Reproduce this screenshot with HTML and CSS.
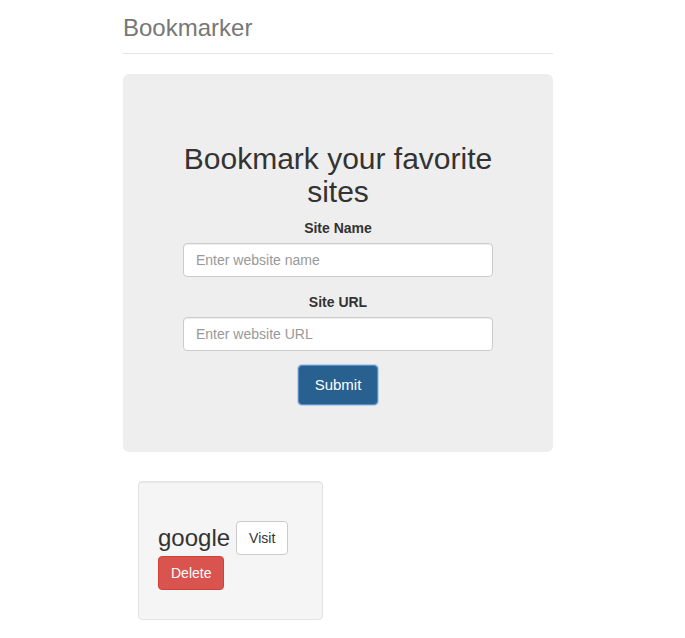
FILE: index.html
```html
<!DOCTYPE html>
<html lang="en">
<head>
<meta charset="utf-8">
<title>Bookmarker</title>
<link rel="stylesheet" href="styles.css">
</head>
<body>
<div class="container">
  <div class="header">
    <h3 class="brand">Bookmarker</h3>
  </div>
  <div class="jumbotron">
    <h2 class="title">Bookmark your favorite sites</h2>
    <form class="form">
      <div class="form-group">
        <label class="label" for="siteName">Site Name</label>
        <input class="input" type="text" id="siteName" placeholder="Enter website name">
      </div>
      <div class="form-group">
        <label class="label" for="siteUrl">Site URL</label>
        <input class="input" type="text" id="siteUrl" placeholder="Enter website URL">
      </div>
      <button type="button" class="btn btn-primary">Submit</button>
    </form>
  </div>
  <div class="bookmarks">
    <div class="well">
      <div class="bookmark">
        <span class="bookmark-name">google</span>
        <a class="btn btn-default" href="#">Visit</a>
        <a class="btn btn-danger" href="#">Delete</a>
      </div>
    </div>
  </div>
</div>
</body>
</html>
```
FILE: styles.css
```css
* { box-sizing: border-box; }
html, body { margin: 0; padding: 0; }
body {
  font-family: "Liberation Sans", Arial, Helvetica, sans-serif;
  font-size: 14px;
  line-height: 1.42857;
  color: #333;
  background: #fff;
}
.container {
  width: 430px;
  margin-left: 123px;
}
.header {
  padding: 15px 0 12px;
  border-bottom: 1px solid #e5e5e5;
  margin-bottom: 20px;
}
.brand {
  margin: 0;
  font-size: 24px;
  font-weight: normal;
  line-height: 26px;
  color: #777;
}
.jumbotron {
  background: #eee;
  border-radius: 6px;
  padding: 48px 60px 47px;
  text-align: center;
  margin-bottom: 29px;
}
.title {
  margin: 20px 0 10px;
  font-size: 30px;
  font-weight: normal;
  line-height: 33px;
  color: #333;
}
.form-group { margin-bottom: 15px; }
.label {
  display: block;
  font-weight: bold;
  line-height: 20px;
  margin-bottom: 5px;
}
.input {
  display: block;
  width: 100%;
  height: 34px;
  padding: 6px 12px;
  font-family: inherit;
  font-size: 14px;
  color: #555;
  background: #fff;
  border: 1px solid #ccc;
  border-radius: 4px;
  box-shadow: inset 0 1px 1px rgba(0,0,0,.075);
}
.input::placeholder { color: #999; }
.btn {
  display: inline-block;
  padding: 6px 12px;
  font-family: inherit;
  font-size: 14px;
  line-height: 20px;
  border: 1px solid transparent;
  border-radius: 4px;
  text-decoration: none;
  cursor: pointer;
  vertical-align: middle;
}
.btn-primary {
  display: block;
  margin: -1px auto 0;
  font-size: 15px;
  line-height: 22px;
  padding: 8px 16px;
  color: #fff;
  background: #286090;
  border-color: #5a8dc4;
  box-shadow: 0 0 0 1px rgba(120,170,230,.45);
}
.btn-default {
  color: #333;
  background: #fff;
  border-color: #ccc;
}
.btn-danger {
  color: #fff;
  background: #d9534f;
  border-color: #d43f3a;
}
.bookmarks { padding-left: 15px; }
.well {
  width: 185px;
  padding: 19px;
  background: #f5f5f5;
  border: 1px solid #e3e3e3;
  border-radius: 4px;
  box-shadow: inset 0 1px 1px rgba(0,0,0,.05);
}
.bookmark {
  display: flex;
  flex-wrap: wrap;
  align-items: center;
  column-gap: 6px;
  row-gap: 1px;
  margin: 20px 0 10px;
}
.bookmark-name {
  font-size: 24px;
  line-height: 26px;
  color: #333;
}
```
